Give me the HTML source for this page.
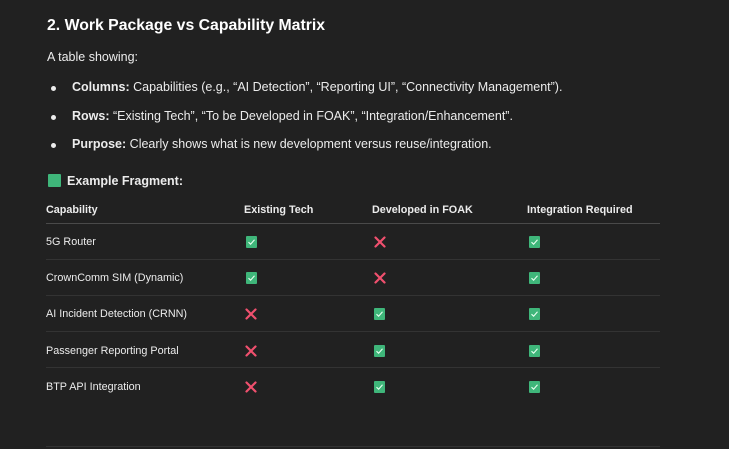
<!DOCTYPE html>
<html><head><meta charset="utf-8"><style>
body{margin:0;width:729px;height:449px;background:#212121;color:#ececec;font-family:"Liberation Sans",sans-serif;position:relative;overflow:hidden}
.a{position:absolute;white-space:nowrap}
h2{position:absolute;left:47px;top:17px;margin:0;font-size:15.8px;font-weight:bold;color:#fff}
.p{font-size:12.5px}
.dot{position:absolute;width:5px;height:5px;border-radius:50%;background:#ececec}
.t{font-size:10.8px}
.line{position:absolute;left:46px;width:614px;height:1px;background:#333}
.ck{position:absolute;width:11px;height:12px;background:#3fb67a;border-radius:1px}
.ck svg{position:absolute;left:2px;top:3px}
.x{position:absolute;width:12px;height:12px}
</style></head><body>
<h2>2. Work Package vs Capability Matrix</h2>
<div class="a p" style="left:47px;top:50px">A table showing:</div>
<div class="dot" style="left:51px;top:86px"></div>
<div class="a p" style="left:72px;top:80px"><b>Columns:</b> Capabilities (e.g., “AI Detection”, “Reporting UI”, “Connectivity Management”).</div>
<div class="dot" style="left:51px;top:115px"></div>
<div class="a p" style="left:72px;top:109px"><b>Rows:</b> “Existing Tech”, “To be Developed in FOAK”, “Integration/Enhancement”.</div>
<div class="dot" style="left:51px;top:143px"></div>
<div class="a p" style="left:72px;top:137px"><b>Purpose:</b> Clearly shows what is new development versus reuse/integration.</div>
<div style="position:absolute;left:48px;top:174px;width:13px;height:13px;background:#3fb67a;border-radius:1px"></div>
<div class="a p" style="left:67px;top:174px;font-weight:bold">Example Fragment:</div>

<div class="a t" style="left:46px;top:204px;font-weight:bold">Capability</div>
<div class="a t" style="left:244px;top:204px;font-weight:bold">Existing Tech</div>
<div class="a t" style="left:372px;top:204px;font-weight:bold">Developed in FOAK</div>
<div class="a t" style="left:527px;top:204px;font-weight:bold">Integration Required</div>
<div class="line" style="top:223px;background:#4a4a4a"></div>
<div class="line" style="top:259px"></div>
<div class="line" style="top:295px"></div>
<div class="line" style="top:331px"></div>
<div class="line" style="top:367px"></div>
<div class="line" style="top:446px"></div>

<div class="a t" style="left:46px;top:236px">5G Router</div>
<div class="a t" style="left:46px;top:272px">CrownComm SIM (Dynamic)</div>
<div class="a t" style="left:46px;top:308px">AI Incident Detection (CRNN)</div>
<div class="a t" style="left:46px;top:345px">Passenger Reporting Portal</div>
<div class="a t" style="left:46px;top:381px">BTP API Integration</div>

<svg width="0" height="0" style="position:absolute"><defs>
<symbol id="c" viewBox="0 0 7 6"><path d="M0.5 3.2L2.6 5.2L6.5 0.8" stroke="#e8fff0" stroke-width="1.1" fill="none"/></symbol>
<symbol id="xx" viewBox="0 0 12 12"><path d="M1.5 1.5L10.5 10.5M10.5 1.5L1.5 10.5" stroke="#f0506e" stroke-width="2.2" stroke-linecap="round"/></symbol>
</defs></svg>

<div class="ck" style="left:246px;top:236px"><svg width="7" height="6"><use href="#c"/></svg></div>
<svg class="x" style="left:374px;top:236px"><use href="#xx"/></svg>
<div class="ck" style="left:529px;top:236px"><svg width="7" height="6"><use href="#c"/></svg></div>

<div class="ck" style="left:246px;top:272px"><svg width="7" height="6"><use href="#c"/></svg></div>
<svg class="x" style="left:374px;top:272px"><use href="#xx"/></svg>
<div class="ck" style="left:529px;top:272px"><svg width="7" height="6"><use href="#c"/></svg></div>

<svg class="x" style="left:245px;top:308px"><use href="#xx"/></svg>
<div class="ck" style="left:374px;top:308px"><svg width="7" height="6"><use href="#c"/></svg></div>
<div class="ck" style="left:529px;top:308px"><svg width="7" height="6"><use href="#c"/></svg></div>

<svg class="x" style="left:245px;top:345px"><use href="#xx"/></svg>
<div class="ck" style="left:374px;top:345px"><svg width="7" height="6"><use href="#c"/></svg></div>
<div class="ck" style="left:529px;top:345px"><svg width="7" height="6"><use href="#c"/></svg></div>

<svg class="x" style="left:245px;top:381px"><use href="#xx"/></svg>
<div class="ck" style="left:374px;top:381px"><svg width="7" height="6"><use href="#c"/></svg></div>
<div class="ck" style="left:529px;top:381px"><svg width="7" height="6"><use href="#c"/></svg></div>
</body></html>
